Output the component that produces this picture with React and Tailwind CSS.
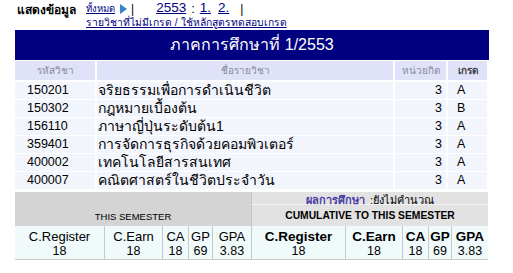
import React from "react";

const rows = [
  ["150201", "จริยธรรมเพื่อการดำเนินชีวิต", "3", "A"],
  ["150302", "กฎหมายเบื้องต้น", "3", "B"],
  ["156110", "ภาษาญี่ปุ่นระดับต้น1", "3", "A"],
  ["359401", "การจัดการธุรกิจด้วยคอมพิวเตอร์", "3", "A"],
  ["400002", "เทคโนโลยีสารสนเทศ", "3", "A"],
  ["400007", "คณิตศาสตร์ในชีวิตประจำวัน", "3", "A"],
];

function Stats({ bold }) {
  const w = bold ? "font-bold text-[13.5px]" : "text-[13px]";
  const cols = bold
    ? "grid-cols-[93px_56px_25px_22px_36px]"
    : "grid-cols-[89px_57px_25px_23px_38px]";
  const cells = [
    ["C.Register", "18"],
    ["C.Earn", "18"],
    ["CA", "18"],
    ["GP", "69"],
    ["GPA", "3.83"],
  ];
  return (
    <div className={`grid ${cols} h-[33px] bg-[#c8c8c8] gap-x-px`}>
      {cells.map(([a, b]) => (
        <div key={a} className="bg-[#f1fafa] flex flex-col items-center pt-[3px]">
          <span className={`leading-[15px] ${w}`}>{a}</span>
          <span className="text-[12.5px] leading-[14px]">{b}</span>
        </div>
      ))}
    </div>
  );
}

export default function App() {
  return (
    <div
      className="w-[513px] h-[273px] bg-white text-black"
      style={{ fontFamily: "'Liberation Sans', Tahoma, sans-serif" }}
    >
      <div className="pl-[15px] w-[489px]">
        {/* top nav */}
        <div className="flex pt-[2px] h-[28px]">
          <div className="w-[71px] pl-[2px] pt-[1px] text-[12px] font-bold leading-[14px]">แสดงข้อมูล</div>
          <div className="flex flex-col">
            <div className="flex items-end h-[14px] text-[#000080] leading-[14px]">
              <span className="text-[9.5px] underline">ทั้งหมด</span>
              <svg width="7" height="10" viewBox="0 0 7 10" className="ml-[5px] mb-[2px]">
                <path d="M0 0 L7 5 L0 10 Z" fill="#3b84c8" />
              </svg>
              <span className="ml-[4px] text-[12px] text-black">|</span>
              <span className="ml-[22px] text-[13.5px] leading-[16px] underline">2553</span>
              <span className="ml-[5px] text-[13px] text-black">:</span>
              <span className="ml-[5px] text-[13.5px] leading-[16px] underline">1.</span>
              <span className="ml-[7px] text-[13.5px] leading-[16px] underline">2.</span>
              <span className="ml-[11px] text-[12px] text-black">|</span>
            </div>
            <div className="text-[10.3px] leading-[12px] underline text-[#000080] mt-[1px]">
              รายวิชาที่ไม่มีเกรด / ใช้หลักสูตรทดสอบเกรด
            </div>
          </div>
        </div>

        {/* title bar */}
        <div className="mt-[2px] h-[30px] bg-[#000080] text-white text-[16px] flex items-center justify-center">
          ภาคการศึกษาที่ 1/2553
        </div>

        {/* table */}
        <div className="mt-[1px] grid grid-cols-[80px_296px_51px_39px] gap-x-[2px]">
          <div className="h-[19px] bg-[#dfe2f8] text-[10px] text-[#8a8a9a] flex items-center justify-center">รหัสวิชา</div>
          <div className="h-[19px] bg-[#dfe2f8] text-[10px] text-[#8a8a9a] flex items-center justify-center">ชื่อรายวิชา</div>
          <div className="h-[19px] bg-[#dfe2f8] text-[10px] text-[#8a8a9a] flex items-center justify-center">หน่วยกิต</div>
          <div className="h-[19px] bg-[#dfe2f8] text-[10px] text-[#444] font-bold flex items-center justify-center">เกรด</div>
        </div>
        <div className="mt-[2px] grid grid-cols-[80px_296px_51px_39px] gap-x-[2px] gap-y-px">
          {rows.map(([c, n, u, g]) => (
            <React.Fragment key={c}>
              <div className="h-[17px] bg-[#f3f5fd] text-[12.5px] leading-[17px] pl-[12px]">{c}</div>
              <div className="h-[17px] bg-[#f3f5fd] text-[14px] leading-[17px] pl-[1px] whitespace-nowrap">{n}</div>
              <div className="h-[17px] bg-[#f3f5fd] text-[12.5px] leading-[17px] text-right pr-[4px]">{u}</div>
              <div className="h-[17px] bg-[#f3f5fd] text-[12.5px] leading-[17px] pl-[9px]">{g}</div>
            </React.Fragment>
          ))}
        </div>

        {/* summary */}
        <div className="mt-[3px] w-[473px] flex bg-[#c8c8c8] gap-x-px border-b border-[#c8c8c8]">
          <div className="w-[236px] flex flex-col">
            <div className="h-[34px] bg-[#d4d4d4] text-[9.5px] leading-[12px] flex items-end justify-center pb-[3px]">THIS SEMESTER</div>
            <Stats />
          </div>
          <div className="w-[236px] flex flex-col">
            <div className="h-[13px] bg-[#e2e2e2] leading-[13px] text-center border-b border-[#f4f4f4] whitespace-nowrap">
              <span className="text-[#4a3fa6] font-bold text-[11px]">ผลการศึกษา</span>
              <span className="ml-[5px] text-[11px]">:ยังไม่คำนวณ</span>
            </div>
            <div className="h-[21px] bg-[#e2e2e2] text-[10.3px] font-bold flex items-center justify-center">CUMULATIVE TO THIS SEMESTER</div>
            <Stats bold />
          </div>
        </div>
      </div>
    </div>
  );
}
